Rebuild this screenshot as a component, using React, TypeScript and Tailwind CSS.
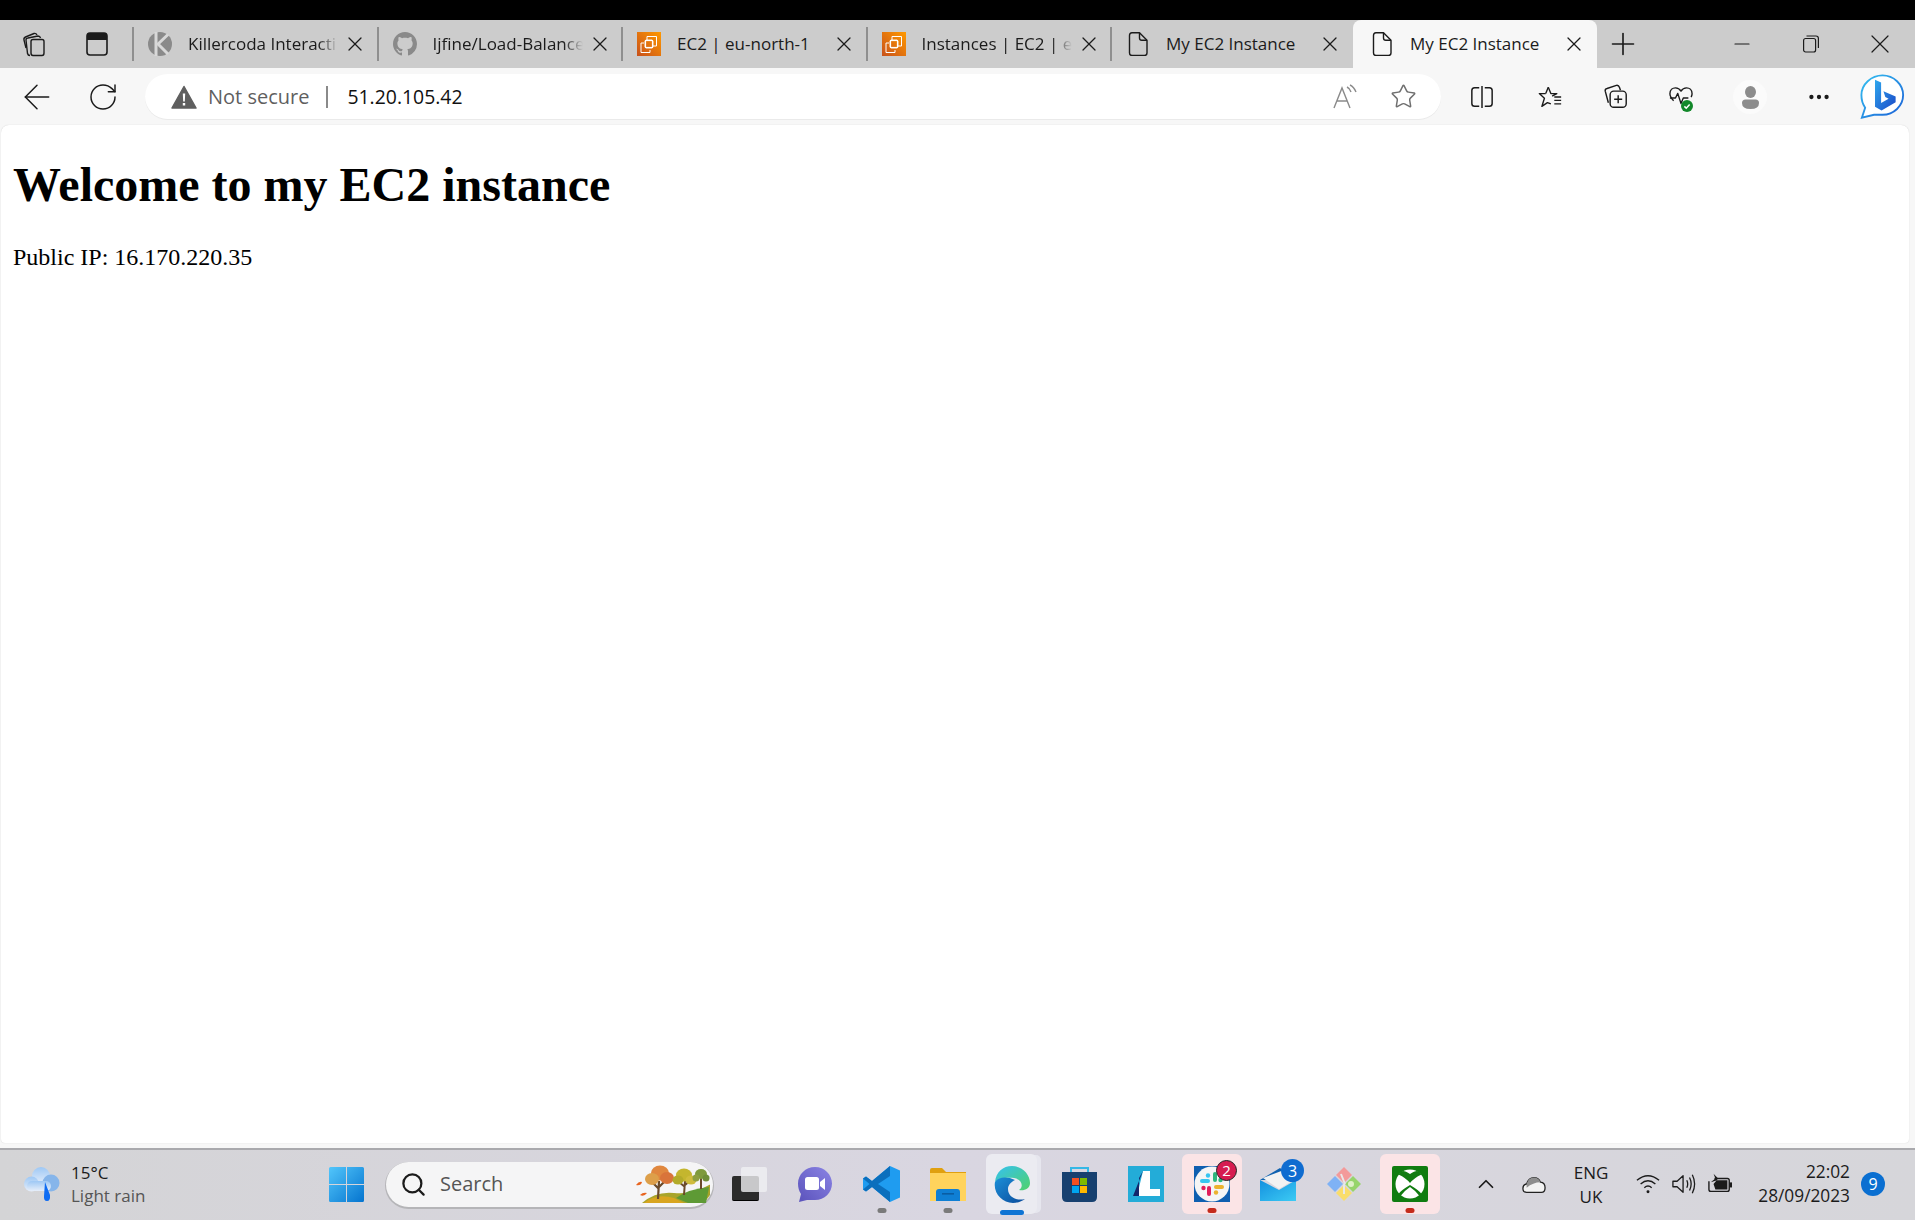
import React from "react";
import { X, Plus, Minus, ArrowLeft, RotateCw, Search, ChevronUp, MoreHorizontal, Star } from "lucide-react";

type TabProps = {
  title: string;
  icon: React.ReactNode;
  fade?: boolean;
  active?: boolean;
  noSep?: boolean;
};

const sans = "font-['Open_Sans','Noto_Sans',sans-serif]";
const sep = "border-r-2 border-[#8f8f8f] [border-image:linear-gradient(transparent_17%,#8f8f8f_17%,#8f8f8f_83%,transparent_83%)_1]";

function KillercodaIcon() {
  return (
    <svg width="24" height="24" viewBox="0 0 24 24" fill="none">
      <circle cx="12" cy="12" r="12" fill="#8a8a8a" />
      <path d="M8 0V24" stroke="#d8d8d8" strokeWidth="3" />
      <path d="M9 13 20 2.500M9 11 20 22" stroke="#d8d8d8" strokeWidth="3" />
    </svg>
  );
}

function GithubIcon() {
  return (
    <svg width="24" height="24" viewBox="0 0 16 16" fill="#8a8a8a">
      <path d="M8 0C3.58 0 0 3.58 0 8c0 3.54 2.29 6.53 5.47 7.59.4.07.55-.17.55-.38 0-.19-.01-.82-.01-1.49-2.01.37-2.53-.49-2.69-.94-.09-.23-.48-.94-.82-1.13-.28-.15-.68-.52-.01-.53.63-.01 1.08.58 1.23.82.72 1.21 1.87.87 2.33.66.07-.52.28-.87.51-1.07-1.78-.2-3.64-.89-3.64-3.95 0-.87.31-1.59.82-2.15-.08-.2-.36-1.02.08-2.12 0 0 .67-.21 2.2.82.64-.18 1.32-.27 2-.27s1.36.09 2 .27c1.53-1.04 2.2-.82 2.2-.82.44 1.1.16 1.92.08 2.12.51.56.82 1.27.82 2.15 0 3.07-1.87 3.75-3.65 3.95.29.25.54.73.54 1.48 0 1.07-.01 1.93-.01 2.2 0 .21.15.46.55.38A8.01 8.01 0 0 0 16 8c0-4.42-3.58-8-8-8Z" />
    </svg>
  );
}

function Ec2Icon() {
  return (
    <svg width="24" height="24" viewBox="0 0 24 24" fill="none">
      <defs>
        <linearGradient id="ec2" x1="0" y1="1" x2="1" y2="0">
          <stop offset="0" stopColor="#c8511b" />
          <stop offset="1" stopColor="#ff9900" />
        </linearGradient>
      </defs>
      <rect width="24" height="24" fill="url(#ec2)" />
      <path d="M10 8V4.500h9.500V14H16M13 18v2.500H4V11h3" stroke="#fff" strokeWidth="1" />
      <rect x="8.500" y="8.500" width="7" height="7" stroke="#fff" strokeWidth="1.200" />
      <path d="M10 7v1.500M12 7v1.500M14 7v1.500M10 15.500V17M12 15.500V17M14 15.500V17M7 10h1.500M7 12h1.500M7 14h1.500M15.500 10H17M15.500 12H17M15.500 14H17" stroke="#fff" strokeWidth=".8" />
    </svg>
  );
}

function PageIcon() {
  return (
    <svg width="24" height="24" viewBox="0 0 24 24" fill="none" stroke="#1b1b1b" strokeWidth="1.400" strokeLinejoin="round">
      <path d="M3.500 3.500Q3.500 .8 6 .8H13.500L21 8.300V21Q21 23.500 18.500 23.500H6Q3.500 23.500 3.500 21Z" />
      <path d="M13.500 .8V6Q13.500 8.300 15.800 8.300H21" />
    </svg>
  );
}

function Tab({ title, icon, fade, active, noSep }: TabProps) {
  const plain = active || noSep;
  return (
    <div
      className={`relative flex h-12 shrink-0 items-center ${
        active
          ? "w-[244px] rounded-t-lg bg-[#f7f7f7] pl-[17px]"
          : noSep
            ? "w-[241px] pl-[14px]"
            : `w-[244.500px] pl-[14px] ${sep}`
      }`}
    >
      <span className="w-6 shrink-0">{icon}</span>
      <span
        className={`ml-4 w-[150px] shrink-0 whitespace-nowrap text-[17px] text-[#1b1b1b] ${
          fade ? "[mask-image:linear-gradient(to_right,black_87%,transparent_100%)]" : ""
        }`}
      >
        {title}
      </span>
      <X size={24} strokeWidth={1.300} className={`shrink-0 text-[#1b1b1b] ${plain ? "ml-[2px]" : "ml-[5px]"}`} />
    </div>
  );
}

function TabStrip() {
  return (
    <div className={`flex h-12 items-center bg-[#cccccc] ${sans}`}>
      <div className={`flex h-12 w-[134px] shrink-0 items-center ${sep}`}>
        <svg className="ml-[21px]" width="26" height="26" viewBox="0 0 26 26" fill="none" stroke="#1b1b1b" strokeWidth="1.400" strokeLinejoin="round">
          <path d="M9 24.500 Q7 24.500 6.500 22.500L5 9Q5 7 7 7L17 5Q19 5 19.500 7" />
          <path d="M5 17 3 9Q2.500 7 4.500 6L13 2.500Q15 2 16 4" />
          <path d="M10 10.500Q10 8.500 12 8.500H21Q23 8.500 23 10.500V22Q23 24.500 21 24.500H12Q10 24.500 10 22Z" />
        </svg>
        <svg className="ml-[39px]" width="22" height="24" viewBox="0 0 22 24" fill="none">
          <rect x="1" y="1" width="20" height="22" rx="3" stroke="#1b1b1b" strokeWidth="1.600" />
          <path d="M1 3.500Q1 1 3.500 1H18.500Q21 1 21 3.500V8H1Z" fill="#1b1b1b" />
        </svg>
      </div>
      <Tab title="Killercoda Interacti" icon={<KillercodaIcon />} fade />
      <Tab title="Ijfine/Load-Balance" icon={<GithubIcon />} fade />
      <Tab title="EC2 | eu-north-1" icon={<Ec2Icon />} />
      <Tab title="Instances | EC2 | eu" icon={<Ec2Icon />} fade />
      <Tab title="My EC2 Instance" icon={<PageIcon />} noSep />
      <Tab title="My EC2 Instance" icon={<PageIcon />} active />
      <Plus size={36} strokeWidth={1.100} className="ml-[8px] shrink-0 text-[#1b1b1b]" />
      <Minus size={24} strokeWidth={1.200} className="ml-[89px] shrink-0 text-[#1b1b1b]" />
      <svg className="ml-[49px] shrink-0" width="16" height="18" viewBox="0 0 16 18" fill="none" stroke="#1b1b1b" strokeWidth="1.200">
        <rect x=".6" y="3.500" width="12" height="13.500" rx="2" />
        <path d="M3.500 1H13Q15.400 1 15.400 3.500V13" />
      </svg>
      <X size={32} strokeWidth={0.900} className="ml-[45px] shrink-0 text-[#1b1b1b]" />
    </div>
  );
}

function BingIcon() {
  return (
    <svg width="45" height="45" viewBox="0 0 48 48" fill="none">
      <defs>
        <linearGradient id="bingRing" x1="0" y1="0" x2="1" y2="1">
          <stop offset="0" stopColor="#35c1f1" />
          <stop offset="1" stopColor="#1b5fd6" />
        </linearGradient>
        <linearGradient id="bingB" x1="0" y1="0" x2="1" y2="1">
          <stop offset="0" stopColor="#2fa8ee" />
          <stop offset="1" stopColor="#1a49c8" />
        </linearGradient>
      </defs>
      <path d="M24 1.500C36 1.500 46 11 46 22.500S36 43.500 24 43.500H15L2 46.500 5.500 36C3 32.500 1.500 28 1.500 22.500 1.500 11 12 1.500 24 1.500Z" fill="#fff" stroke="url(#bingRing)" strokeWidth="2" />
      <path d="M16 6 22.500 9V31L30.500 26.500 27 24.500 25 18.500 38 24V30L23 39 16 35Z" fill="url(#bingB)" />
    </svg>
  );
}

function Toolbar() {
  return (
    <div className={`flex h-[57px] items-start bg-[#f7f7f7] ${sans}`}>
      <ArrowLeft size={40} strokeWidth={0.900} className="ml-[17px] mt-[9px] shrink-0 text-[#1b1b1b]" />
      <RotateCw size={32} strokeWidth={1.100} className="ml-[30px] mt-[13px] shrink-0 text-[#1b1b1b]" />
      <div className="ml-[26px] mt-[6px] flex h-[45px] w-[1296px] shrink-0 items-center rounded-full bg-white shadow-[0_1px_0_#eaeaea]">
        <svg className="ml-[26px]" width="26" height="24" viewBox="0 0 26 24">
          <path d="M13 1.500 25 23H1Z" fill="#5f5f5f" stroke="#5f5f5f" strokeWidth="1.500" strokeLinejoin="round" />
          <path d="M11.800 8.500h2.400l-.4 8h-1.600ZM11.800 18h2.400v2.400h-2.400Z" fill="#fff" />
        </svg>
        <span className="ml-[11px] text-[20px] text-[#5f5f5f]">Not secure</span>
        <span className="ml-[17px] h-[22px] w-[2px] bg-[#8a8a8a]" />
        <span className="ml-[19px] text-[19.400px] text-[#111]">51.20.105.42</span>
        <div className="ml-auto mr-[24px] flex items-center gap-[32px]">
          <svg width="26" height="26" viewBox="0 0 26 26" fill="none" stroke="#8a8a8a" strokeWidth="1.400">
            <path d="M2 24 10 4l8 20M5 17h10" />
            <path d="M15 3q3 1.500 4 5M18 1q4 2 6 7" />
          </svg>
          <Star size={27} strokeWidth={1.300} className="text-[#6f6f6f]" />
        </div>
      </div>
      <svg className="ml-[29px] mt-[17px] shrink-0" width="24" height="24" viewBox="0 0 26 26" fill="none" stroke="#1b1b1b" strokeWidth="1.600">
        <path d="M10 3H5Q2 3 2 6V20Q2 23 5 23H10M16 3H21Q24 3 24 6V20Q24 23 21 23H16" />
        <path d="M13 1V25" />
      </svg>
      <svg className="ml-[44px] mt-[17px] shrink-0" width="24" height="24" viewBox="0 0 28 26" fill="none" stroke="#1b1b1b" strokeWidth="1.600" strokeLinejoin="round">
        <path d="M12 1.500 15 9H22L16.500 12 M9 9H1.500L7.500 14.500 4.500 24 11 19.500 15 21" />
        <path d="M9 9 12 1.500M19 13H27M19 17H27M19 21H27" />
      </svg>
      <svg className="ml-[41px] mt-[16px] shrink-0" width="25" height="25" viewBox="0 0 28 28" fill="none" stroke="#1b1b1b" strokeWidth="1.600" strokeLinejoin="round">
        <path d="M6 21 2.500 8Q2 5.500 4.500 5L15 1.500Q17.500 1 18.500 4L19.500 7" />
        <rect x="8" y="8" width="18" height="18" rx="4" />
        <path d="M17 12.500v9M12.500 17h9" />
      </svg>
      <div className="relative ml-[41px] mt-[18px] h-6 w-6 shrink-0">
        <svg width="24" height="24" viewBox="0 0 26 26" fill="none" stroke="#1b1b1b" strokeWidth="1.500" strokeLinejoin="round">
          <path d="M5 16C2 13 1 11 1 8.500 1 4 4 2 7 2 9.500 2 11.500 3 13 5.500 14.500 3 16.500 2 19 2 22 2 25 4 25 8.500 25 10 24.500 11 24 12" />
          <path d="M1 13H7L9.500 8 13 19 15.500 13H21" />
        </svg>
        <svg className="absolute bottom-[-2px] right-0" width="12" height="12" viewBox="0 0 16 16">
          <circle cx="8" cy="8" r="8" fill="#12882a" />
          <path d="M4.500 8.500 7 11l4.500-5" fill="none" stroke="#fff" strokeWidth="2" />
        </svg>
      </div>
      <div className="ml-[40px] mt-[12px] flex h-[34px] w-[34px] shrink-0 items-center justify-center rounded-full bg-[#fbfbfb]">
        <svg width="17" height="23" viewBox="0 0 17 23" fill="#8c8c8c">
          <ellipse cx="8.500" cy="6" rx="5.500" ry="6" />
          <path d="M0 17q0-3.500 3.500-3.500h10Q17 13.500 17 17q0 6-8.500 6T0 17Z" />
        </svg>
      </div>
      <MoreHorizontal size={26} strokeWidth={2} className="ml-[39px] mt-[16px] shrink-0 text-[#1b1b1b]" />
      <div className="ml-[28px] mt-[6px] shrink-0">
        <BingIcon />
      </div>
    </div>
  );
}

function TreesIcon() {
  return (
    <svg width="76" height="38" viewBox="0 0 76 38">
      <path d="M8 38Q22 26 40 28T75 20 70 38Z" fill="#a8a42a" />
      <path d="M10 38Q22 28 40 33L50 38Z" fill="#d8a51f" />
      <path d="M42 33Q54 24 75 22L72 38H54Z" fill="#5e9a35" />
      <path d="M24 34 25 16M25 24l-7-7M25 22l7-7" stroke="#6b4a2a" strokeWidth="2.200" fill="none" />
      <ellipse cx="26" cy="8" rx="9" ry="7.500" fill="#e0873f" />
      <ellipse cx="18" cy="14" rx="7" ry="6" fill="#dd9f4a" />
      <ellipse cx="33" cy="13" rx="7" ry="6" fill="#d9743a" />
      <path d="M50 30 51 16M51 22l-6-5M51 20l6-5" stroke="#6b4a2a" strokeWidth="2" fill="none" />
      <ellipse cx="50" cy="10" rx="8" ry="6.500" fill="#c4b62e" />
      <ellipse cx="44" cy="15" rx="5.500" ry="4.500" fill="#b3ab2a" />
      <ellipse cx="57" cy="15" rx="5.500" ry="4.500" fill="#cfbc3c" />
      <path d="M67 24 67 12" stroke="#6b4a2a" strokeWidth="2" />
      <ellipse cx="67" cy="9" rx="6" ry="5" fill="#7e9a3c" />
      <ellipse cx="62" cy="13" rx="3.500" ry="3.500" fill="#8d9e40" />
      <ellipse cx="72" cy="13" rx="3.500" ry="3.500" fill="#6f8e38" />
      <path d="M2 20Q5 16 8 17 7 21 2 20ZM6 30Q9 27 13 28 10 32 6 30Z" fill="#e8641f" />
    </svg>
  );
}

function Dot({ color }: { color: string }) {
  return <span className={`absolute bottom-[1px] left-1/2 h-[5px] w-[9px] -translate-x-1/2 rounded-full ${color}`} />;
}

function TaskItem({ className, children }: { className?: string; children: React.ReactNode }) {
  return <div className={`relative flex h-[60px] shrink-0 items-center justify-center ${className ?? ""}`}>{children}</div>;
}

function Taskbar() {
  return (
    <div className={`flex h-[72px] items-center border-t-2 border-[#a9a9ad] pb-[2px] bg-[linear-gradient(90deg,#d4d4d6,#d9d6e1_50%,#d6d6da)] ${sans}`}>
      <svg className="ml-[24px] shrink-0" width="36" height="34" viewBox="0 0 36 34">
        <defs>
          <linearGradient id="cloud" x1="0" y1="0" x2="0" y2="1">
            <stop offset="0" stopColor="#9ec8f5" />
            <stop offset="1" stopColor="#e6eefa" />
          </linearGradient>
        </defs>
        <circle cx="17" cy="9" r="9" fill="url(#cloud)" />
        <circle cx="7.500" cy="17" r="7.500" fill="url(#cloud)" />
        <circle cx="27" cy="16" r="8.500" fill="#86b5ea" />
        <rect x="3" y="14" width="24" height="10" rx="5" fill="url(#cloud)" />
        <path d="M21 15 26 28Q26.500 34 23 34 19.500 34 20 29Z" fill="#0f6cf2" />
      </svg>
      <div className="ml-[11px] flex w-[120px] shrink-0 flex-col text-[17px] leading-[23.500px]">
        <span className="text-[#1b1b1b]">15°C</span>
        <span className="text-[#555]">Light rain</span>
      </div>
      <svg className="ml-[138px] shrink-0" width="35" height="35" viewBox="0 0 35 35">
        <defs>
          <linearGradient id="win" x1="0" y1="0" x2="1" y2="1">
            <stop offset="0" stopColor="#52c6fb" />
            <stop offset="1" stopColor="#0574cf" />
          </linearGradient>
        </defs>
        <path d="M1.500 0H17V17H0V1.500Q0 0 1.500 0ZM18 0H33.500Q35 0 35 1.500V17H18ZM0 18H17V35H1.500Q0 35 0 33.500ZM18 18H35V33.500Q35 35 33.500 35H18Z" fill="url(#win)" />
      </svg>
      <div className="ml-[22px] flex h-[45px] w-[327px] shrink-0 items-center rounded-full bg-[#f5f5f6] shadow-[0_1px_0_1px_#b5b5b8]">
        <Search size={27} strokeWidth={2} className="ml-[14px] text-[#1b1b1b]" />
        <span className="ml-[13px] text-[20px] text-[#555]">Search</span>
        <span className="ml-auto mr-[3px]">
          <TreesIcon />
        </span>
      </div>
      <TaskItem className="ml-[19px] w-[35px]">
        <div className="relative h-[34px] w-[35px]">
          <span className="absolute bottom-0 left-0 h-[25px] w-[27px] rounded-[2px] border-b border-black bg-[#2b2b2b]" />
          <span className="absolute right-0 top-0 h-[25px] w-[26px] rounded-[2px] bg-[#f0f0f2]/80" />
        </div>
      </TaskItem>
      <TaskItem className="ml-[31px] w-[34px]">
        <svg width="34" height="35" viewBox="0 0 34 35">
          <defs>
            <linearGradient id="meet" x1="1" y1="0" x2="0" y2="1">
              <stop offset="0" stopColor="#8b84e4" />
              <stop offset="1" stopColor="#5a52bb" />
            </linearGradient>
          </defs>
          <path d="M17 0C26.500 0 34 7.500 34 16.500S26.500 33 17 33H9L1 35 3 27C1 24 0 20.500 0 16.500 0 7.500 7.500 0 17 0Z" fill="url(#meet)" />
          <rect x="7" y="10" width="14" height="13" rx="2.500" fill="#fff" />
          <path d="M22 15 27 11V23L22 19Z" fill="#fff" />
        </svg>
      </TaskItem>
      <TaskItem className="ml-[31px] w-[37px]">
        <svg width="37" height="36" viewBox="0 0 37 36">
          <path d="M27 0 37 4.500V31.500L27 36 9 21 3 25.500 0 23.500V12.500L3 10.500 9 15Z" fill="#1f9cf0" />
          <path d="M27 0V10L15 18 27 26V36L9 21 3 25.500 0 23.500 6.500 18 0 12.500 3 10.500 9 15Z" fill="#0b6fbd" />
        </svg>
        <Dot color="bg-[#7a7a7a]" />
      </TaskItem>
      <TaskItem className="ml-[30px] w-[36px]">
        <svg width="36" height="33" viewBox="0 0 36 33">
          <path d="M0 2Q0 0 2 0H12L16 4H36V32H0Z" fill="#e0a00f" />
          <rect y="5" width="36" height="28" fill="#ffd35c" />
          <path d="M9 21H27Q30 21 30 24V33H6V24Q6 21 9 21Z" fill="#0f7fd4" />
          <rect x="12" y="25" width="12" height="1.600" fill="#0a5da3" />
        </svg>
        <Dot color="bg-[#7a7a7a]" />
      </TaskItem>
      <TaskItem className="ml-[20px] h-[56px] w-[51px] rounded-md bg-[#ebebf1] shadow-[5px_0_0_-1px_#e6e6ee]">
        <svg width="36" height="37" viewBox="0 0 36 37">
          <defs>
            <linearGradient id="edge1" x1="0" y1="0" x2="1" y2="1">
              <stop offset="0" stopColor="#35c1f1" />
              <stop offset="1" stopColor="#4fd26b" />
            </linearGradient>
            <linearGradient id="edge2" x1="0" y1="0" x2="1" y2="1">
              <stop offset="0" stopColor="#1b8fd8" />
              <stop offset="1" stopColor="#0c4c9c" />
            </linearGradient>
          </defs>
          <path d="M1 16C2 6 9 0 18 0 28 0 36 8 36 17 36 23 30 25 25 24 30 21 28 13 20 12 12 11 4 13 1 16Z" fill="url(#edge1)" />
          <path d="M1 16C-1 27 8 37 19 37 24 37 28 35 31 33 24 35 14 32 14 23 14 19 17 16 21 14 13 10 4 11 1 16Z" fill="url(#edge2)" />
        </svg>
        <span className="absolute bottom-[-1px] left-1/2 h-[5px] w-[24px] -translate-x-1/2 rounded-full bg-[#0f74d4]" />
      </TaskItem>
      <TaskItem className="ml-[25px] w-[35px]">
        <svg width="35" height="35" viewBox="0 0 35 35">
          <path d="M9 7V1H26V7" fill="none" stroke="#35b8e6" strokeWidth="2" />
          <path d="M0 5H35V30Q35 35 30 35H5Q0 35 0 30Z" fill="#17406f" />
          <rect x="10" y="11" width="7" height="7" fill="#f25022" />
          <rect x="18" y="11" width="7" height="7" fill="#7fba00" />
          <rect x="10" y="19" width="7" height="7" fill="#00a4ef" />
          <rect x="18" y="19" width="7" height="7" fill="#ffb900" />
        </svg>
      </TaskItem>
      <TaskItem className="ml-[31px] w-[36px]">
        <svg width="36" height="36" viewBox="0 0 36 36">
          <rect width="36" height="36" fill="#23acd8" />
          <path d="M15 5H22V23H32V30H9Z" fill="#fff" />
          <path d="M15 5 5 30H11V12Z" fill="#14276b" />
        </svg>
      </TaskItem>
      <TaskItem className="ml-[18px] w-[60px] rounded-md bg-[#fbe4e6]">
        <svg width="36" height="36" viewBox="0 0 36 36">
          <rect width="36" height="36" fill="#0f5fb0" />
          <circle cx="18" cy="18" r="17.500" fill="#f5f5f5" />
          <rect x="6" y="13" width="10" height="4" rx="2" fill="#36c5f0" />
          <circle cx="14" cy="9.500" r="2.200" fill="#36c5f0" />
          <rect x="19" y="6" width="4" height="10" rx="2" fill="#2eb67d" />
          <circle cx="26.500" cy="14" r="2.200" fill="#2eb67d" />
          <rect x="20" y="19" width="10" height="4" rx="2" fill="#ecb22e" />
          <circle cx="22" cy="26.500" r="2.200" fill="#ecb22e" />
          <rect x="13" y="20" width="4" height="10" rx="2" fill="#e01e5a" />
          <circle cx="9.500" cy="22" r="2.200" fill="#e01e5a" />
        </svg>
        <span className="absolute right-[5px] top-[6px] flex h-[21px] w-[21px] items-center justify-center rounded-full border border-[#222] bg-[#d61c50] text-[15px] text-white">2</span>
        <Dot color="bg-[#c42b1c]" />
      </TaskItem>
      <TaskItem className="ml-[18px] w-[36px]">
        <svg width="36" height="33" viewBox="0 0 36 33">
          <defs>
            <linearGradient id="mail" x1="0" y1="0" x2="1" y2="1">
              <stop offset="0" stopColor="#1490df" />
              <stop offset="1" stopColor="#3ccbf4" />
            </linearGradient>
          </defs>
          <path d="M0 12 20 0 36 12Z" fill="#0f62b0" />
          <path d="M3 10 24 2 34 12 19 21Z" fill="#f2f2f2" />
          <path d="M0 33V12L19 22 36 12V33Z" fill="url(#mail)" />
        </svg>
        <span className="absolute right-[-8px] top-[5px] flex h-[23px] w-[23px] items-center justify-center rounded-full bg-[#0f6cd0] text-[16px] text-white">3</span>
      </TaskItem>
      <TaskItem className="ml-[30px] w-[36px]">
        <svg width="36" height="36" viewBox="0 0 36 36">
          <path d="M9 10 17 18 9 26 1 18Z" fill="#7fb2f5" />
          <path d="M18 1 26 9 18 17 10 9Z" fill="#f39a9a" />
          <path d="M27 10 35 18 27 26 19 18Z" fill="#97d46c" />
          <path d="M18 19 26 27 18 35 10 27Z" fill="#f9dd6b" />
          <path d="M15 8 19 18M18 18V28" stroke="#e8e8e8" strokeWidth="2" />
          <circle cx="25" cy="18" r="3" fill="#dff0c8" />
        </svg>
      </TaskItem>
      <TaskItem className="ml-[18px] w-[60px] rounded-md bg-[#fbe4e6]">
        <svg width="36" height="36" viewBox="0 0 36 36">
          <rect width="36" height="36" rx="2" fill="#107c10" />
          <circle cx="18" cy="18" r="14.500" fill="#fff" />
          <path d="M18 8Q12 4 9.500 5.500L6.500 8.500Q14 12 18 17 22 12 29.500 8.500L26.500 5.500Q24 4 18 8Z" fill="#107c10" />
          <path d="M18 19Q8 25 6.500 28L8.500 30Q12 25 18 21 24 25 27.500 30L29.500 28Q28 25 18 19Z" fill="#107c10" />
        </svg>
        <Dot color="bg-[#c42b1c]" />
      </TaskItem>
      <ChevronUp size={26} strokeWidth={1.600} className="ml-[33px] shrink-0 text-[#1b1b1b]" />
      <svg className="ml-[23px] shrink-0" width="24" height="20" viewBox="0 0 26 20">
        <path d="M5 19Q1 19 1 14.500 1 10.500 5 10 7 3 13 3 18 3 20 8 25 8.500 25 14 25 19 21 19Z" fill="#f3f3f3" stroke="#222" strokeWidth="1.400" />
        <path d="M5 10Q7 3 13 3 18 3 20 8 12 8 5 14Z" fill="#8e8e8e" />
      </svg>
      <div className="ml-[25px] flex w-[40px] shrink-0 flex-col items-center pt-[1px] text-[17px] leading-[24px] text-[#1b1b1b]">
        <span>ENG</span>
        <span>UK</span>
      </div>
      <svg className="ml-[25px] shrink-0" width="24" height="24" viewBox="0 0 26 24" fill="none" stroke="#1b1b1b" strokeWidth="1.500">
        <path d="M1 8Q13-2 25 8M5 12Q13 5 21 12M9 16Q13 12.500 17 16" />
        <circle cx="13" cy="20.500" r="1.600" fill="#1b1b1b" stroke="none" />
      </svg>
      <svg className="ml-[12px] shrink-0" width="24" height="24" viewBox="0 0 26 24" fill="none" stroke="#1b1b1b" strokeWidth="1.400" strokeLinejoin="round">
        <path d="M1 9H5.500L12 3V21L5.500 15H1Z" />
        <path d="M16 8Q18 12 16 16M19 5Q22.500 12 19 19M22 2Q27 12 22 22" />
      </svg>
      <svg className="ml-[12px] shrink-0" width="24" height="24" viewBox="0 0 26 24" fill="none" stroke="#1b1b1b" strokeWidth="1.500">
        <path d="M7 6H21Q23 6 23 8V18Q23 20 21 20H3Q1 20 1 18V9" />
        <path d="M3 10 8 6 6 1 11 6 6 12 8 18H21V8H10Z" fill="#1b1b1b" stroke="none" />
        <path d="M24 11H25.500V15H24Z" fill="#1b1b1b" />
      </svg>
      <div className="flex w-[118px] shrink-0 flex-col items-end text-[17.300px] leading-[24px] text-[#1b1b1b]">
        <span>22:02</span>
        <span>28/09/2023</span>
      </div>
      <span className="ml-[11px] flex h-6 w-6 shrink-0 items-center justify-center rounded-full bg-[#0a6fd1] text-[16px] text-white">9</span>
    </div>
  );
}

export default function App() {
  return (
    <div className="flex h-[1220px] w-[1915px] flex-col overflow-hidden bg-[#f7f7f7]">
      <div className="h-5 bg-black" />
      <TabStrip />
      <Toolbar />
      <div className="mb-[5px] ml-[1px] mr-[6px] min-h-0 flex-1 rounded-t-lg rounded-b-sm bg-white pl-[12px] font-['Liberation_Serif',serif] text-black shadow-[0_0_1px_#c8c8c8]">
        <h1 className="mt-[32px] text-[48px] leading-[55px] font-bold">Welcome to my EC2 instance</h1>
        <p className="mt-[32px] text-[24px] leading-[27px]">Public IP: 16.170.220.35</p>
      </div>
      <Taskbar />
    </div>
  );
}
